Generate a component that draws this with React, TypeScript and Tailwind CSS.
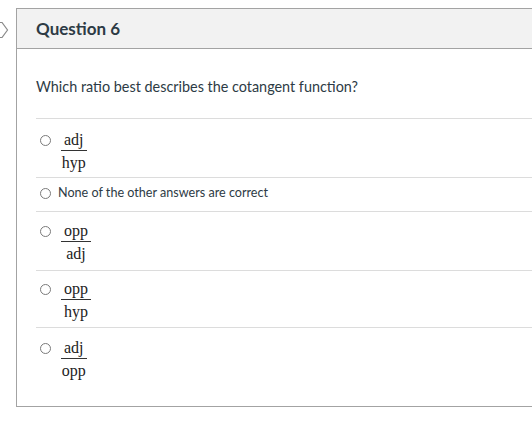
const ANSWERS: { kind: 'frac' | 'text'; num?: string; den?: string; text?: string; h: string; pt: string }[] = [
  { kind: 'frac', num: 'adj', den: 'hyp', h: 'h-[59px]', pt: 'pt-[12px]' },
  { kind: 'text', text: 'None of the other answers are correct', h: 'h-[34px]', pt: 'pt-[6px]' },
  { kind: 'frac', num: 'opp', den: 'adj', h: 'h-[59px]', pt: 'pt-[10px]' },
  { kind: 'frac', num: 'opp', den: 'hyp', h: 'h-[57px]', pt: 'pt-[9px]' },
  { kind: 'frac', num: 'adj', den: 'opp', h: 'h-[79px]', pt: 'pt-[11px]' },
];

function Radio() {
  return <span className="block w-[11px] h-[11px] rounded-full border border-[#7a7a7a] bg-white shrink-0" />;
}

export default function App() {
  return (
    <div className="relative w-[532px] h-[426px] overflow-hidden bg-white font-['Lato',sans-serif] text-[#2d3b45]">
      {/* flag marker, clipped at the left edge */}
      <svg className="absolute left-[-9px] top-[22px]" width="18" height="16" viewBox="0 0 18 16">
        <polygon points="0.5,0.5 11,0.5 16.5,8 11,15.5 0.5,15.5" fill="none" stroke="#8a8a8a" strokeWidth="1.2" />
      </svg>

      <div className="ml-4 mt-2 w-[540px] border border-[#a3a3a3] border-r-0">
        <div className="h-[40px] bg-[#f2f2f2] border-b border-[#a3a3a3] flex items-center px-[19px]">
          <h2 className="text-[17px] font-bold text-[#2d3b45] leading-none">Question 6</h2>
        </div>

        <div className="px-[19px]">
          <p className="pt-[28px] pb-[21px] text-[14.4px] leading-[20px] text-[#2d3b45]">
            Which ratio best describes the cotangent function?
          </p>

          <div>
            {ANSWERS.map((a, i) => (
              <div
                key={i}
                className={`${a.h} ${a.pt} border-t border-[#dcdcdc] pl-[4px] flex items-start ${
                  a.kind === 'text' ? 'gap-[7px]' : 'gap-[9px]'
                }`}
              >
                <div className="pt-[4px]">
                  <Radio />
                </div>
                {a.kind === 'frac' ? (
                  <div className="inline-flex flex-col items-center font-['Liberation_Serif',serif] text-[16px] text-[#222] px-[1px]">
                    <span className="leading-[17px] px-[3px] border-b border-[#333] pb-[2px]">{a.num}</span>
                    <span className="leading-[17px] pt-[3px]">{a.den}</span>
                  </div>
                ) : (
                  <span className="text-[12.6px] leading-[18px] text-[#2d3b45]">{a.text}</span>
                )}
              </div>
            ))}
          </div>
        </div>
      </div>
    </div>
  );
}
